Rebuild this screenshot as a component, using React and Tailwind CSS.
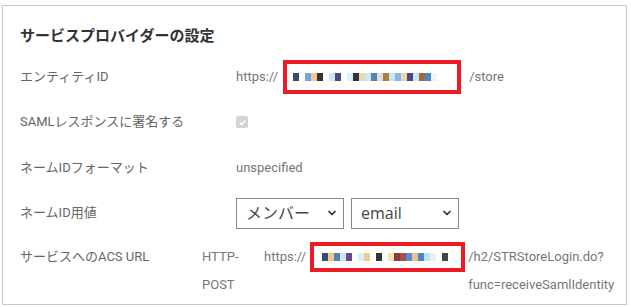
import { ChevronDown } from 'lucide-react'

const FONT = "font-['Roboto','Noto_Sans_CJK_JP',sans-serif]"

const MOSAIC_1 = ['#3b4a6b', '#fff', '#6fa8dc', '#f3c98b', '#333', '#fff', '#c9e7f5', '#4a4a7a', '#fff', '#d8f1fb', '#333', '#f0d7a8', '#c9e7f5', '#5b7fb5', '#ddd', '#b07a3a', '#c6e6f7', '#8fb5dd', '#ebd6ae', '#54467a', '#c9e7f5', '#a06a3a', '#4a86c8', '#e9f6fd']
const MOSAIC_2 = ['#3b4a6b', '#f3c98b', '#5b7fb5', '#c9e7f5', '#6b4a8a', '#fff', '#d8f1fb', '#f3c98b', '#fff', '#333', '#fff', '#f0e6b0', '#8a3a3a', '#a05050', '#5b8fc8', '#f0c080', '#4a86c8', '#bfe3f6', '#e0f3fc', '#fff', '#444']

function Mosaic({ colors }) {
  return (
    <div className="flex items-center h-[10px]">
      {colors.map((c, i) => (
        <span key={i} className="w-[6px] h-[8px]" style={{ background: c }} />
      ))}
    </div>
  )
}

function Select({ value, width }) {
  return (
    <div className={`${width} h-[31px] border border-[#8a8a8a] bg-white flex items-center justify-between pl-[9px] pr-[5px] text-[16px] text-[#444] font-['Open_Sans','Noto_Sans_CJK_JP',sans-serif]`}>
      <span>{value}</span>
      <ChevronDown size={12} strokeWidth={3.5} className="text-[#333]" />
    </div>
  )
}

function Row({ label, children, className = '' }) {
  return (
    <div className={`flex items-center ${className}`}>
      <div className="w-[216px] shrink-0 text-[#666]">{label}</div>
      {children}
    </div>
  )
}

export default function App() {
  return (
    <div className={`w-[631px] h-[307px] bg-white pt-[5px] pl-[2px] pr-[4px] ${FONT} text-[13px]`}>
      <div className="h-[300px] border border-[#c8c8c8] pl-[17px]">
        <h2 className="text-[15px] font-bold text-[#333] pt-[19px] leading-[22px]">サービスプロバイダーの設定</h2>

        <Row label="エンティティID" className="mt-[10px] h-[40px]">
          <span className="text-[#777]">https://</span>
          <div className="ml-[5px] w-[178px] h-[34px] border-4 border-[#ec1c24] flex items-center pl-[6px]">
            <Mosaic colors={MOSAIC_1} />
          </div>
          <span className="ml-[8px] text-[#777]">/store</span>
        </Row>

        <Row label="SAMLレスポンスに署名する" className="mt-[1px] h-[48px]">
          <span className="w-[12px] h-[12px] rounded-[2px] bg-[#d4d4d4] flex items-center justify-center">
            <svg width="9" height="9" viewBox="0 0 10 10">
              <path d="M2 5.2 L4.2 7.3 L8.2 2.8" fill="none" stroke="#fff" strokeWidth="1.8" />
            </svg>
          </span>
        </Row>

        <Row label="ネームIDフォーマット" className="h-[43px]">
          <span className="text-[#777]">unspecified</span>
        </Row>

        <Row label="ネームID用値" className="h-[48px]">
          <Select value="メンバー" width="w-[108px]" />
          <div className="w-[7px]" />
          <Select value="email" width="w-[108px]" />
        </Row>

        <div className="flex mt-[6px] leading-[28px]">
          <div className="w-[182px] shrink-0 text-[#666]">サービスへのACS URL</div>
          <div className="w-[62px] shrink-0 text-[#777]">
            <div>HTTP-</div>
            <div>POST</div>
          </div>
          <div className="flex items-start">
            <span className="text-[#777]">https://</span>
            <div className="-mt-[1px] ml-[4px] w-[155px] h-[30px] border-4 border-[#ec1c24] flex items-center pl-[8px]">
              <Mosaic colors={MOSAIC_2} />
            </div>
            <div className="ml-[3px] text-[#777]">
              <div>/h2/STRStoreLogin.do?</div>
              <div>func=receiveSamlIdentity</div>
            </div>
          </div>
        </div>
      </div>
    </div>
  )
}
